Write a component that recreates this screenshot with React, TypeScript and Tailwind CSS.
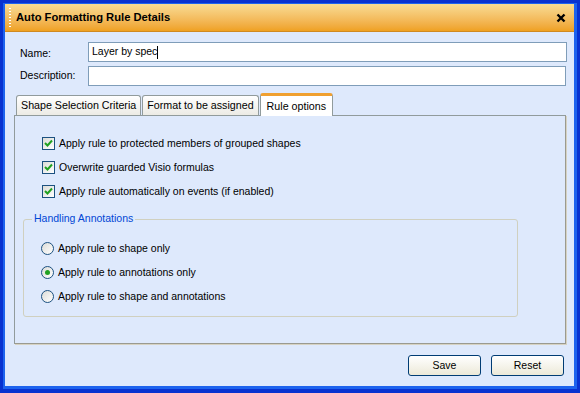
// App.tsx

function CheckBox({ label }: { label: string }) {
    return (
        <div className="flex items-center h-[13px]">
            <div className="w-[13px] h-[13px] border border-[#1c5180] bg-gradient-to-br from-[#dcdcd7] to-white flex items-center justify-center">
                <svg width="9" height="9" viewBox="0 0 9 9">
                    <path d="M1 4 L3.5 6.5 L8 1.5" stroke="#21a121" strokeWidth="2" fill="none" />
                </svg>
            </div>
            <span className="ml-[4px] text-[10.5px] text-black leading-none">{label}</span>
        </div>
    );
}

function Radio({ label, checked }: { label: string; checked?: boolean }) {
    return (
        <div className="flex items-center h-[13px]">
            <div className="w-[13px] h-[13px] rounded-full border border-[#1c5180] bg-gradient-to-br from-[#dcdcd7] to-white flex items-center justify-center">
                {checked && <div className="w-[5px] h-[5px] rounded-full bg-[#21a121]" />}
            </div>
            <span className="ml-[4px] text-[10.5px] text-black leading-none">{label}</span>
        </div>
    );
}

function Tab({ label, active }: { label: string; active?: boolean }) {
    if (active) {
        return (
            <div className="h-[23px] -mb-px px-[6px] flex items-center bg-white border border-b-0 border-[#919b9c] border-t-[3px] border-t-[#f0a030] rounded-t-[3px] relative z-10 text-[10.7px]">
                {label}
            </div>
        );
    }
    return (
        <div className="h-[20px] px-[4px] flex items-center bg-gradient-to-b from-white to-[#ecebe5] border border-b-0 border-[#919b9c] rounded-t-[3px] text-[10.7px]">
            {label}
        </div>
    );
}

function Button({ label }: { label: string }) {
    return (
        <button className="w-[73px] h-[21px] rounded-[3px] border border-[#003c74] bg-gradient-to-b from-white to-[#ece9d8] text-[10.5px] text-black">
            {label}
        </button>
    );
}

export default function App() {
    return (
        <div
            className="w-[580px] h-[393px] bg-[#0832d0] pt-[3px] pl-[3px] pr-[3px] pb-[4px] flex"
            style={{ fontFamily: "Tahoma, 'Liberation Sans', Arial, sans-serif" }}
        >
            <div className="flex-1 flex flex-col border-l-2 border-r-[3px] border-b-[3px] border-t border-[#1d63ee] bg-[#dee9fc]">
                {/* title bar */}
                <div className="h-[28px] bg-gradient-to-b from-[#f8dc93] to-[#efa11f] flex items-center pl-[4px] pr-[8px] border-b border-[#d08a20]">
                    <div className="flex flex-col gap-[2px] mr-[5px]">
                        {[0, 1, 2, 3, 4, 5, 6].map((i) => (
                            <div key={i} className="w-[2px] h-[1px] bg-white" />
                        ))}
                    </div>
                    <span className="font-bold text-[11.2px] text-black flex-1">Auto Formatting Rule Details</span>
                    <svg width="10" height="10" viewBox="0 0 10 10">
                        <path d="M1.5 1.5 L8.5 8.5 M8.5 1.5 L1.5 8.5" stroke="#000" strokeWidth="2.4" />
                    </svg>
                </div>

                {/* fields */}
                <div className="pl-[15px] pr-[7px] pt-[10px] flex flex-col gap-[4px]">
                    <div className="flex items-center">
                        <span className="w-[68px] text-[10.5px] pt-[4px]">Name:</span>
                        <div className="flex-1 h-[20px] bg-white border border-[#7f9db9] flex items-center px-[3px] text-[10.5px]">
                            Layer by spec<span className="w-px h-[13px] bg-black" />
                        </div>
                    </div>
                    <div className="flex items-center">
                        <span className="w-[68px] text-[10.5px]">Description:</span>
                        <div className="flex-1 h-[20px] bg-white border border-[#7f9db9] mr-[1px]" />
                    </div>
                </div>

                {/* tabs */}
                <div className="pl-[9px] pr-[8px] mt-[7px] flex flex-col">
                    <div className="flex items-end gap-[1px] pl-[2px]">
                        <Tab label="Shape Selection Criteria" />
                        <Tab label="Format to be assigned" />
                        <Tab label="Rule options" active />
                    </div>
                    <div className="h-[229px] border border-[#919b9c] border-r-[#9a9a90] border-b-[#9a9a90] shadow-[1px_1px_0_#d6d2c2] bg-[#dee9fc] pl-[27px] pr-[47px] pt-[21px]">
                        <div className="flex flex-col gap-[11px]">
                            <CheckBox label="Apply rule to protected members of grouped shapes" />
                            <CheckBox label="Overwrite guarded Visio formulas" />
                            <CheckBox label="Apply rule automatically on events (if enabled)" />
                        </div>
                        <div className="relative mt-[21px] -ml-[19px] h-[98px] border border-[#d0d0bf] rounded-[3px] pl-[17px] pt-[22px]">
                            <span className="absolute -top-[7px] left-[8px] px-[2px] bg-[#dee9fc] text-[#0046d5] text-[10.5px] leading-none">
                                Handling Annotations
                            </span>
                            <div className="flex flex-col gap-[11px]">
                                <Radio label="Apply rule to shape only" />
                                <Radio label="Apply rule to annotations only" checked />
                                <Radio label="Apply rule to shape and annotations" />
                            </div>
                        </div>
                    </div>
                </div>

                {/* buttons */}
                <div className="flex justify-end gap-[10px] pr-[10px] mt-[11px]">
                    <Button label="Save" />
                    <Button label="Reset" />
                </div>
            </div>
        </div>
    );
}
